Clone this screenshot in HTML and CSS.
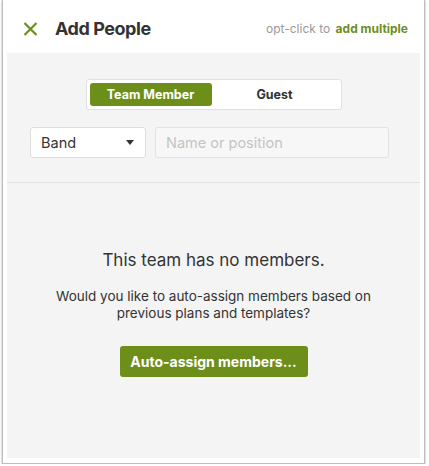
FILE: index.html
```html
<!DOCTYPE html>
<html>
<head>
    <title>Add People</title>
    <link rel="stylesheet" href="styles.css">
</head>
<body>
    <div class="frame">
        <div class="header">
            <span class="close">
                <svg width="15" height="14" viewBox="0 0 15 14"><path d="M1.5 1 L13.5 13 M13.5 1 L1.5 13" stroke="#6b8f1c" stroke-width="2.2" fill="none"/></svg>
            </span>
            <span class="title">Add People</span>
            <span class="hint">opt-click to <b>add multiple</b></span>
        </div>
        <div class="panel">
            <div class="top">
                <div class="toggle">
                    <span class="opt on">Team Member</span>
                    <span class="opt">Guest</span>
                </div>
                <div class="row">
                    <div class="select">Band <span class="caret"></span></div>
                    <div class="search">Name or position</div>
                </div>
            </div>
            <div class="empty">
                <p class="big">This team has no members.</p>
                <p class="small">Would you like to auto-assign members based on<br>previous plans and templates?</p>
                <span class="btn">Auto-assign members...</span>
            </div>
        </div>
    </div>
</body>
</html>
```

FILE: styles.css
```css
body{
    margin:0;
    background-color:#ffffff;
    font-family:Inter, "Liberation Sans", sans-serif;
    color:#333333;
}
.frame{
    margin-left:2px;
    width:423px;
    height:464px;
    border:1px solid #bdbdbd;
    border-top:none;
    box-shadow:0 1px 2px rgba(0,0,0,0.35);
    padding:0 4px 5px 4px;
    box-sizing:border-box;
    display:flex;
    flex-direction:column;
}
.header{
    height:53px;
    display:flex;
    align-items:center;
    padding-left:16px;
    padding-right:12px;
    padding-top:4px;
    box-sizing:border-box;
}
.close{
    display:flex;
    width:15px;
    height:14px;
}
.title{
    margin-left:17px;
    font-size:18px;
    font-weight:700;
    color:#333333;
    letter-spacing:-0.45px;
}
.hint{
    margin-left:auto;
    font-size:12px;
    color:#999999;
}
.hint b{
    color:#6b8f1c;
    margin-left:2px;
}
.panel{
    flex:1;
    background-color:#f4f4f4;
    display:flex;
    flex-direction:column;
}
.top{
    padding-top:26px;
    padding-bottom:24px;
    border-bottom:1px solid #e2e2e2;
}
.toggle{
    width:256px;
    height:31px;
    margin:0 auto;
    background-color:#ffffff;
    border:1px solid #e0e0e0;
    border-radius:3px;
    box-sizing:border-box;
    padding:3px;
    display:flex;
}
.opt{
    flex:1;
    display:flex;
    align-items:center;
    justify-content:center;
    font-size:12.5px;
    font-weight:700;
    color:#333333;
    border-radius:3px;
}
.opt.on{
    flex:0 0 122px;
    background-color:#6d8f1a;
    color:#ffffff;
}
.row{
    display:flex;
    margin-top:17px;
    padding-left:23px;
    gap:9px;
}
.select{
    width:116px;
    height:31px;
    box-sizing:border-box;
    background-color:#ffffff;
    border:1px solid #dddddd;
    border-radius:3px;
    display:flex;
    align-items:center;
    padding:0 11px 0 10px;
    font-size:14.5px;
    color:#333333;
}
.caret{
    margin-left:auto;
    width:0;
    height:0;
    border-left:4.5px solid transparent;
    border-right:4.5px solid transparent;
    border-top:5px solid #333333;
}
.search{
    width:234px;
    height:31px;
    box-sizing:border-box;
    background-color:#f7f7f7;
    border:1px solid #e2e2e2;
    border-radius:3px;
    display:flex;
    align-items:center;
    padding-left:10px;
    font-size:14.5px;
    color:#c4c4c4;
}
.empty{
    text-align:center;
}
.big{
    margin:67px 0 0 0;
    font-size:17px;
    color:#333333;
}
.small{
    margin:18px 0 0 0;
    font-size:13.5px;
    line-height:17px;
    color:#333333;
}
.btn{
    display:inline-block;
    margin-top:24px;
    width:188px;
    height:31px;
    line-height:31px;
    background-color:#6d8f1a;
    color:#ffffff;
    font-size:14px;
    font-weight:700;
    border-radius:3px;
}
```
